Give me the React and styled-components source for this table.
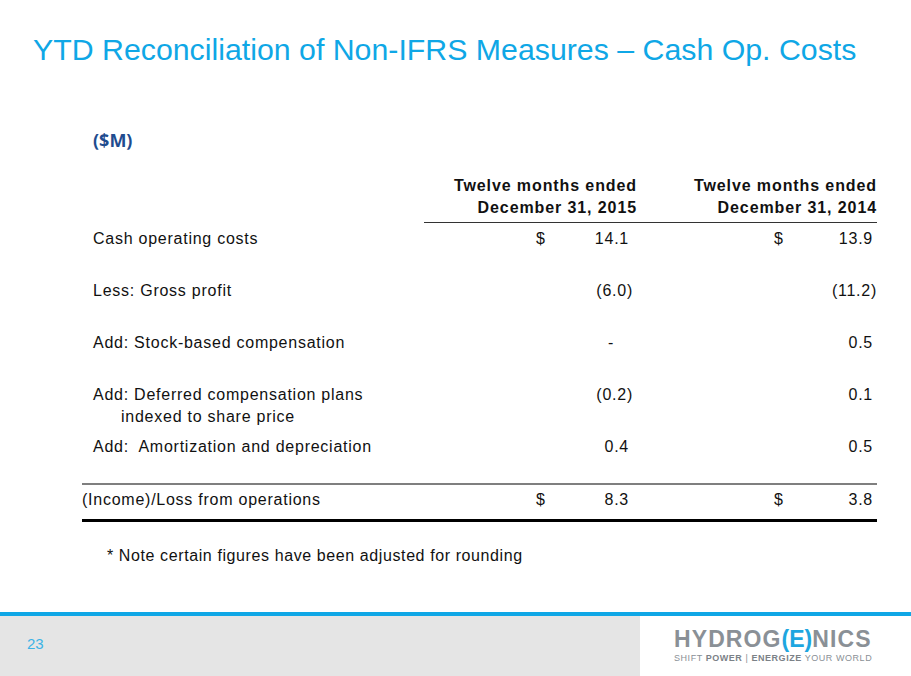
import React from 'react'
import styled, { createGlobalStyle } from 'styled-components'

const colors = {
  title: '#0fa7e6',
  unit: '#1f4c8f',
  text: '#111111',
  rule: '#7f7f7f',
  footer: '#e5e5e5',
  logo: '#8a9096',
  logoDark: '#7b8187',
  accent: '#1ea6e0',
}

const GlobalStyle = createGlobalStyle`
  html, body {
    margin: 0;
    padding: 0;
    background: #ffffff;
  }
  body {
    font-family: "Liberation Sans", Arial, sans-serif;
    color: ${colors.text};
  }
`

const Page = styled.div`
  width: 911px;
  height: 676px;
  display: flex;
  flex-direction: column;
  overflow: hidden;
`

const Main = styled.main`
  flex: 1;
  display: flex;
  flex-direction: column;
`

const Title = styled.h1`
  margin: 33px 0 0 33px;
  font-size: 30.3px;
  line-height: 34px;
  font-weight: 400;
  color: ${colors.title};
  white-space: nowrap;
`

const Content = styled.section`
  width: 795px;
  margin-left: 82px;
  display: flex;
  flex-direction: column;
`

const Unit = styled.div`
  margin: 63px 0 0 11px;
  font-family: "Open Sans", "Liberation Sans", sans-serif;
  font-weight: 700;
  font-size: 18px;
  line-height: 20px;
  color: ${colors.unit};
`

const Grid = styled.div`
  display: grid;
  grid-template-columns: 342px 213px 240px;
  font-size: 16px;
  line-height: 22px;
  letter-spacing: 0.75px;
`

const HeadRow = styled(Grid)`
  margin-top: 25px;
`

const HeadCell = styled.div`
  text-align: right;
  font-weight: 700;
  letter-spacing: 0.9px;
  padding-bottom: 3px;
  border-bottom: ${p => (p.$ruled ? '1px solid #333333' : '1px solid transparent')};
`

const Row = styled(Grid)`
  height: 52px;
  padding-top: 5px;
  box-sizing: border-box;
`

const TotalRow = styled(Grid)`
  padding: 4px 0 8px;
  border-top: 2px solid ${colors.rule};
  border-bottom: 3px solid #000000;
`

const Label = styled.div`
  padding-left: ${p => p.$indent}px;
  white-space: pre;
`

const SubLabel = styled.div`
  padding-left: 28px;
`

const Cell = styled.div`
  display: flex;
  align-items: flex-start;
  padding-right: ${p => p.$pad}px;
`

const Dollar = styled.span`
  margin-left: ${p => p.$at}px;
`

const Value = styled.span`
  margin-left: auto;
`

const Note = styled.p`
  margin: 23px 0 0 25px;
  font-size: 16px;
  line-height: 22px;
  letter-spacing: 0.6px;
`

const Footer = styled.footer`
  height: 60px;
  border-top: 4px solid ${colors.title};
  display: flex;
`

const PageArea = styled.div`
  width: 640px;
  background: ${colors.footer};
  padding: 19px 0 0 27px;
  box-sizing: border-box;
  font-family: "Liberation Sans Narrow", "Liberation Sans", sans-serif;
  font-size: 15px;
  line-height: 18px;
  color: #3cb3e6;
`

const LogoArea = styled.div`
  flex: 1;
  background: #ffffff;
  padding: 10px 0 0 34px;
  display: flex;
  flex-direction: column;
`

const Brand = styled.div`
  font-weight: 700;
  font-size: 23px;
  line-height: 27px;
  letter-spacing: 1.1px;
  color: ${colors.logo};
  white-space: nowrap;
`

const BrandMark = styled.span`
  color: ${colors.accent};
  letter-spacing: 0;
`

const Tagline = styled.div`
  font-size: 9px;
  line-height: 11px;
  letter-spacing: 0.55px;
  color: ${colors.logo};
  white-space: nowrap;

  b {
    color: ${colors.logoDark};
  }
`

const columns = [
  { at: 112, pad: 8 },
  { at: 137, pad: 4 },
]

const Amount = ({ col, value, dollar, dash }) => {
  const { at, pad } = columns[col]
  const isParen = value.startsWith('(')
  let right = isParen ? pad - 4 : pad
  if (dash) right = 23
  return (
    <Cell $pad={right}>
      {dollar && <Dollar $at={at}>$</Dollar>}
      <Value>{value}</Value>
    </Cell>
  )
}

const rows = [
  { label: 'Cash operating costs', a: '14.1', b: '13.9', dollar: true },
  { label: 'Less: Gross profit', a: '(6.0)', b: '(11.2)' },
  { label: 'Add: Stock-based compensation', a: '-', b: '0.5', dash: true },
  { label: 'Add: Deferred compensation plans', sub: 'indexed to share price', a: '(0.2)', b: '0.1' },
  { label: 'Add:  Amortization and depreciation', a: '0.4', b: '0.5' },
]

function App () {
  return (
    <Page>
      <GlobalStyle />
      <Main>
        <Title>YTD Reconciliation of Non-IFRS Measures – Cash Op. Costs</Title>
        <Content>
          <Unit>($M)</Unit>

          <HeadRow>
            <HeadCell />
            <HeadCell $ruled>
              Twelve months ended
              <br />
              December 31, 2015
            </HeadCell>
            <HeadCell $ruled>
              Twelve months ended
              <br />
              December 31, 2014
            </HeadCell>
          </HeadRow>

          {rows.map(row => (
            <Row key={row.label}>
              <Label $indent={11}>
                {row.label}
                {row.sub && <SubLabel>{row.sub}</SubLabel>}
              </Label>
              <Amount col={0} value={row.a} dollar={row.dollar} dash={row.dash} />
              <Amount col={1} value={row.b} dollar={row.dollar} />
            </Row>
          ))}

          <TotalRow>
            <Label $indent={0}>(Income)/Loss from operations</Label>
            <Amount col={0} value="8.3" dollar />
            <Amount col={1} value="3.8" dollar />
          </TotalRow>

          <Note>* Note certain figures have been adjusted for rounding</Note>
        </Content>
      </Main>

      <Footer>
        <PageArea>23</PageArea>
        <LogoArea>
          <Brand>
            HYDROG<BrandMark>(E)</BrandMark>NICS
          </Brand>
          <Tagline>
            SHIFT <b>POWER</b> | <b>ENERGIZE</b> YOUR WORLD
          </Tagline>
        </LogoArea>
      </Footer>
    </Page>
  )
}

export default App
